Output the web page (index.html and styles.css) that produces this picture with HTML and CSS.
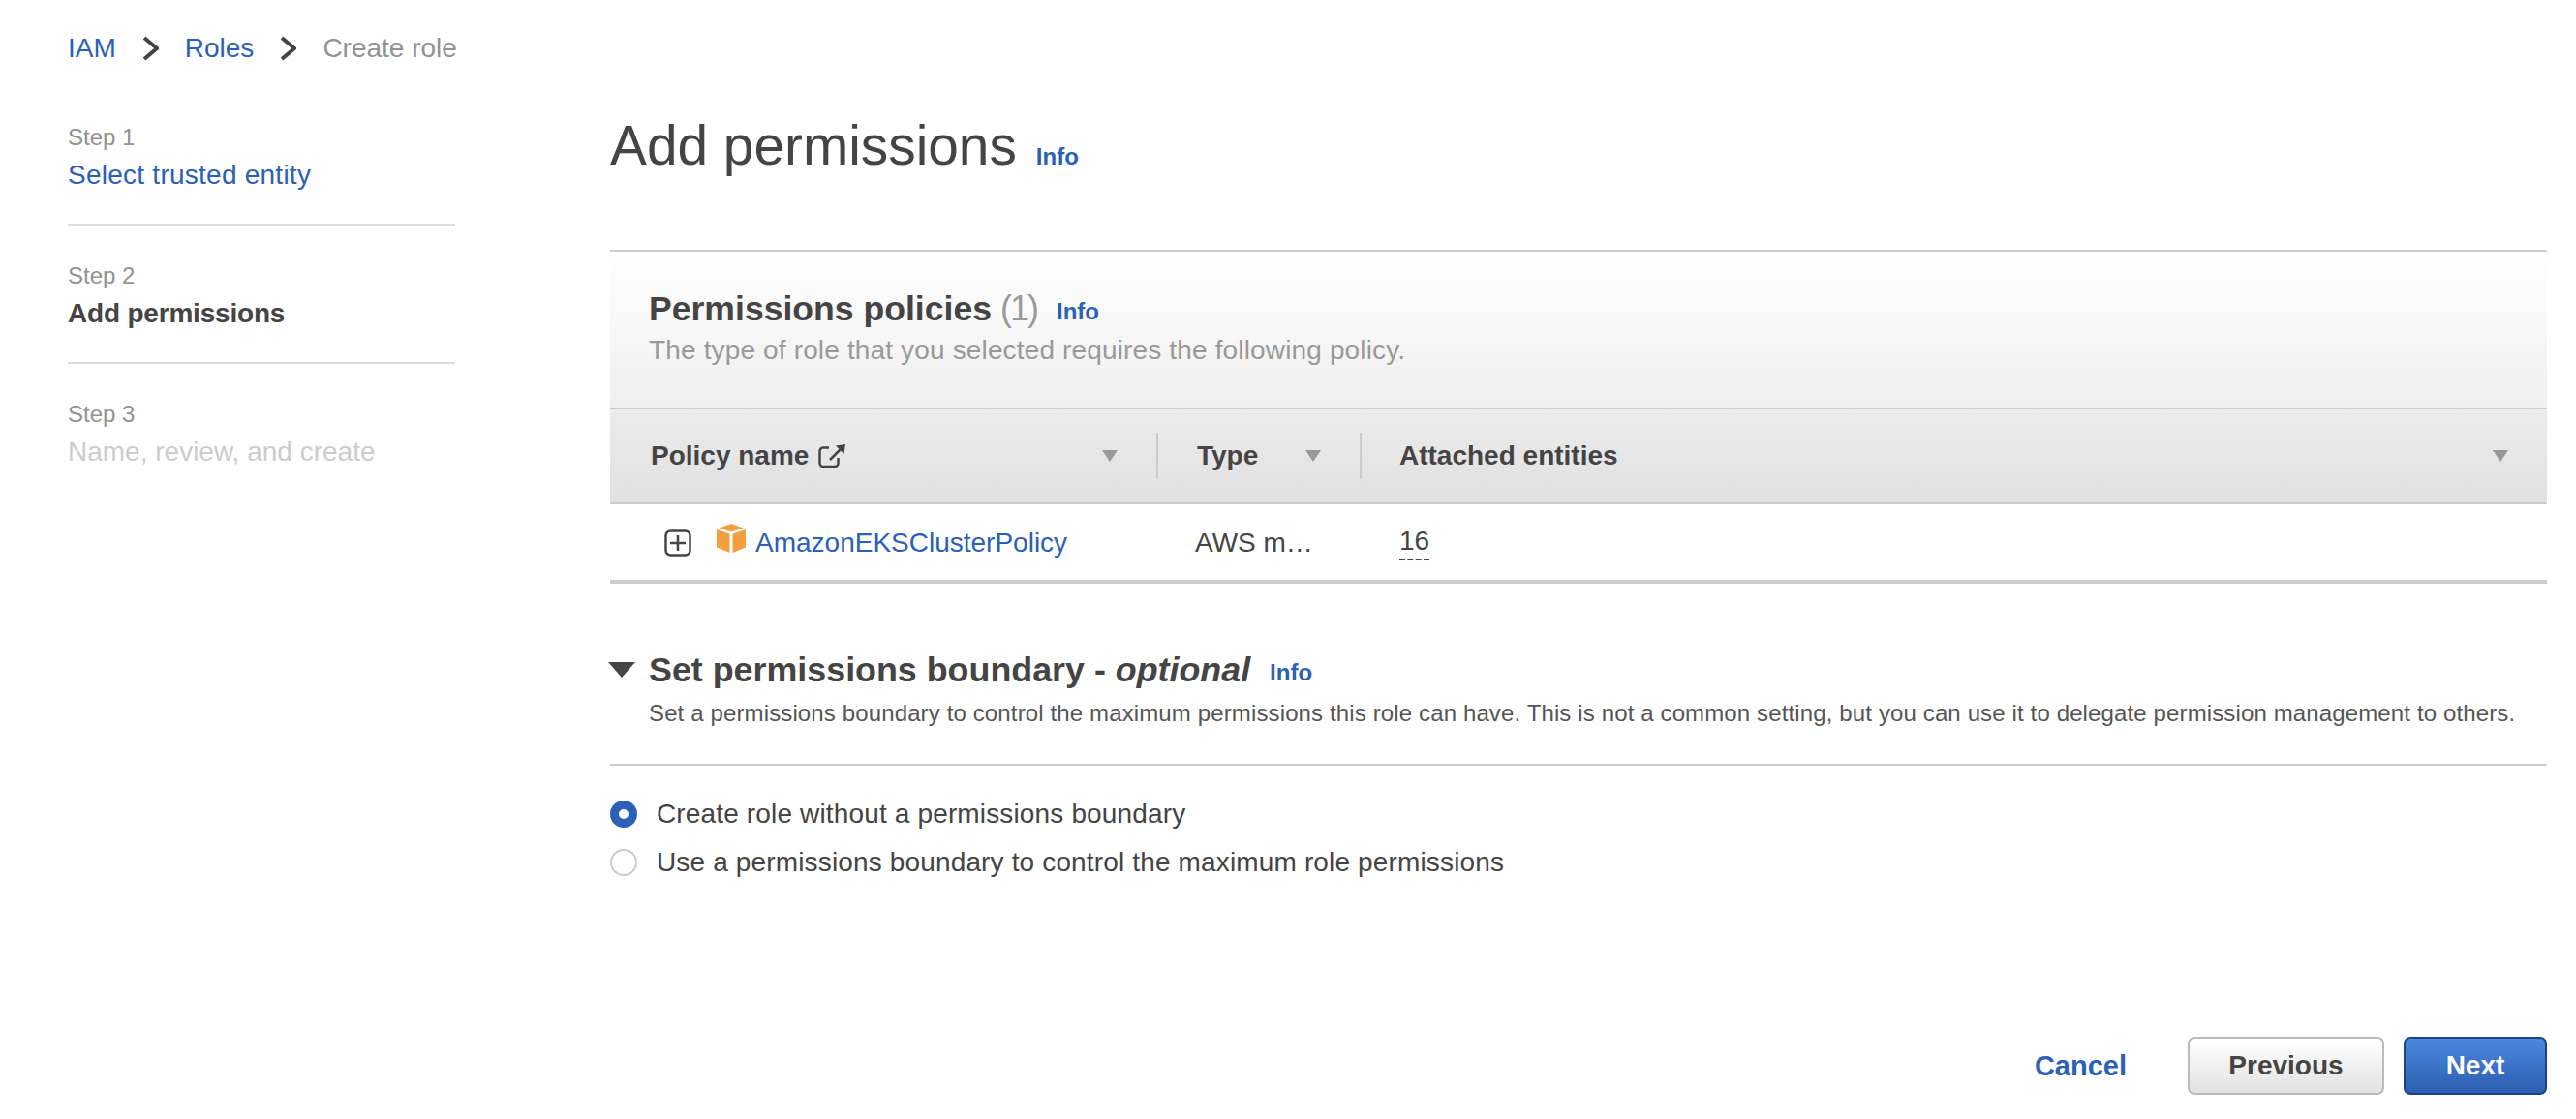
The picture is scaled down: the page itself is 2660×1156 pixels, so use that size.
FILE: index.html
```html
<!DOCTYPE html>
<html>
<head>
<meta charset="UTF-8">
<title>Create role</title>
<link rel="stylesheet" href="styles.css">
</head>
<body>
	<div id="page">
		<nav class="crumbs">
			<a href="#">IAM</a>
			<svg class="chevron" viewBox="0 0 17 26"><path d="M2 2l13 11L2 24" /></svg>
			<a href="#">Roles</a>
			<svg class="chevron" viewBox="0 0 17 26"><path d="M2 2l13 11L2 24" /></svg>
			<span class="crumb-current">Create role</span>
		</nav>

		<div class="layout">
			<ul class="steps">
				<li class="step">
					<div class="step-label">Step 1</div>
					<a class="step-name step-link" href="#">Select trusted entity</a>
				</li>
				<li class="step">
					<div class="step-label">Step 2</div>
					<div class="step-name step-active">Add permissions</div>
				</li>
				<li class="step">
					<div class="step-label">Step 3</div>
					<div class="step-name step-disabled">Name, review, and create</div>
				</li>
			</ul>

			<main class="content">
				<header class="title-row">
					<h1>Add permissions</h1>
					<a class="info" href="#">Info</a>
				</header>

				<section class="panel">
					<div class="panel-head">
						<div class="panel-title">
							<h2>Permissions policies</h2>
							<span class="count">(1)</span>
							<a class="info" href="#">Info</a>
						</div>
						<p class="panel-desc">The type of role that you selected requires the following policy.</p>
					</div>

					<div class="table-head">
						<div class="th col-name">
							<span class="th-label">Policy name
								<svg class="ext-link" viewBox="0 0 28 24">
									<path d="M11 3.500H5A3.500 3.500 0 0 0 1.500 7v12.500A3.500 3.500 0 0 0 5 23h12a3.500 3.500 0 0 0 3.500-3.500V14" />
									<path d="M12 16L23 5" />
									<path class="ext-head" d="M28 0l-1.500 10L18 1.500z" />
								</svg>
							</span>
							<span class="caret"></span>
						</div>
						<div class="th col-type">
							<span class="th-label">Type</span>
							<span class="caret"></span>
						</div>
						<div class="th col-entities">
							<span class="th-label">Attached entities</span>
							<span class="caret"></span>
						</div>
					</div>

					<div class="table-row">
						<div class="td col-name">
							<svg class="expand" viewBox="0 0 28 28">
								<rect x="1.500" y="1.500" width="25" height="25" rx="5" />
								<path d="M14 6v16M6 14h16" />
							</svg>
							<svg class="cube" viewBox="0 0 30 30">
								<path fill="#f2a03d" d="M15 0l12.500 4.500L15 8.500 2.500 4.500z" />
								<path fill="#f2a03d" d="M0 6l13.500 4.500V30L0 24.500z" />
								<path fill="#f2a03d" d="M30 6l-13.500 4.500V30L30 24.500z" />
							</svg>
							<a href="#">AmazonEKSClusterPolicy</a>
						</div>
						<div class="td col-type">AWS m…</div>
						<div class="td col-entities"><span class="dashed">16</span></div>
					</div>
				</section>

				<section class="boundary">
					<div class="boundary-title">
						<span class="toggle"></span>
						<h2>Set permissions boundary - <em>optional</em></h2>
						<a class="info" href="#">Info</a>
					</div>
					<p class="boundary-desc">Set a permissions boundary to control the maximum permissions this role can have. This is not a common setting, but you can use it to delegate permission management to others.</p>
				</section>

				<div class="radios">
					<div class="radio-row"><span class="radio radio-on"></span>Create role without a permissions boundary</div>
					<div class="radio-row"><span class="radio"></span>Use a permissions boundary to control the maximum role permissions</div>
				</div>

				<footer class="actions">
					<a class="cancel" href="#">Cancel</a>
					<button class="btn btn-prev">Previous</button>
					<button class="btn btn-next">Next</button>
				</footer>
			</main>
		</div>
	</div>
</body>
</html>
```

FILE: styles.css
```css
* {
	box-sizing: border-box;
}

body {
	margin: 0;
	background-color: #fff;
	color: #444;
	font-family: "Liberation Sans", Arial, sans-serif;
	font-size: 28px;
}

a {
	color: #2b60b6;
	text-decoration: none;
}

h1, h2, p, ul {
	margin: 0;
	padding: 0;
}

#page {
	padding: 30px 30px 0 70px;
}

.crumbs {
	display: flex;
	align-items: center;
	gap: 27px;
	height: 40px;
	line-height: 40px;
}

.chevron {
	width: 17px;
	height: 26px;
	fill: none;
	stroke: #444;
	stroke-width: 4;
}

.crumb-current {
	color: #929292;
}

.layout {
	display: flex;
}

.steps {
	width: 400px;
	margin: 53px 160px 0 0;
	list-style: none;
}

.step {
	padding-bottom: 30px;
	margin-bottom: 33px;
	border-bottom: 2px solid #ddd;
}

.step:last-child {
	border-bottom: none;
}

.step-label {
	font-size: 24px;
	line-height: 38px;
	color: #929292;
}

.step-name {
	display: block;
	line-height: 40px;
}

.step-link {
	letter-spacing: 0.25px;
}

.step-active {
	font-weight: bold;
	letter-spacing: -0.2px;
}

.step-disabled {
	color: #ccc;
}

.content {
	flex: 1;
	padding-top: 45px;
}

.title-row {
	display: flex;
	align-items: center;
	gap: 20px;
	height: 70px;
}

h1 {
	margin-top: 2px;
	font-size: 56.800px;
	font-weight: normal;
	line-height: 70px;
}

.info {
	font-size: 24px;
	font-weight: bold;
}

.title-row .info {
	margin-top: 24px;
}

.panel {
	margin-top: 73px;
	border-top: 2px solid #ccc;
	border-bottom: 4px solid #ccc;
}

.panel-head {
	height: 161px;
	padding: 37px 0 0 40px;
	background: linear-gradient(#fff, #efefef);
}

.panel-title {
	display: flex;
	align-items: center;
	height: 44px;
	line-height: 44px;
}

h2 {
	font-size: 35.600px;
	font-weight: bold;
}

.count {
	margin-left: 9px;
	font-size: 36px;
	letter-spacing: -2px;
	color: #999;
}

.panel-title .info {
	margin: 6px 0 0 20px;
}

.panel-desc {
	margin-top: 3px;
	font-size: 28px;
	letter-spacing: 0.150px;
	line-height: 36px;
	color: #999;
}

.table-head {
	display: flex;
	align-items: center;
	height: 100px;
	border-top: 2px solid #ccc;
	border-bottom: 2px solid #ccc;
	background: linear-gradient(#ececec, #e0e0e0);
}

.th {
	display: flex;
	align-items: center;
	justify-content: space-between;
	height: 48px;
	padding-right: 40px;
	font-weight: bold;
	border-right: 2px solid #ccc;
}

.th:last-child {
	border-right: none;
}

.th-label {
	display: flex;
	align-items: center;
	gap: 10px;
}

.col-name {
	width: 566px;
	padding-left: 42px;
}

.col-type {
	width: 210px;
	padding-left: 40px;
}

.col-entities {
	flex: 1;
	padding-left: 39px;
}

.ext-link {
	width: 28px;
	height: 24px;
	fill: none;
	stroke: #444;
	stroke-width: 2.500;
}

.ext-head {
	fill: #444;
	stroke: none;
}

.caret {
	width: 0;
	height: 0;
	border-left: 8px solid transparent;
	border-right: 8px solid transparent;
	border-top: 12px solid #999;
}

.table-row {
	display: flex;
	align-items: center;
	height: 78px;
	padding-top: 2px;
}

.td {
	display: flex;
	align-items: center;
}

.td.col-name {
	padding-left: 56px;
}

.td.col-type {
	padding-left: 38px;
}

.expand {
	width: 28px;
	height: 28px;
	margin-right: 26px;
	fill: none;
	stroke: #444;
	stroke-width: 2.500;
}

.cube {
	width: 30px;
	height: 30px;
	margin: -10px 10px 0 0;
}

.dashed {
	padding-bottom: 2px;
	border-bottom: 2px dashed #444;
}

.boundary {
	margin-top: 67px;
	border-bottom: 2px solid #ccc;
	padding-bottom: 35px;
}

.boundary-title {
	display: flex;
	align-items: center;
	height: 44px;
	padding-left: 40px;
	position: relative;
}

.boundary-title h2 {
	font-size: 35.850px;
}

.toggle {
	position: absolute;
	left: -2px;
	top: 14px;
	width: 0;
	height: 0;
	border-left: 14px solid transparent;
	border-right: 14px solid transparent;
	border-top: 16px solid #444;
}

.boundary-title .info {
	margin: 6px 0 0 20px;
}

.boundary-desc {
	margin-top: 6px;
	padding-left: 40px;
	font-size: 24px;
	letter-spacing: 0.130px;
	line-height: 34px;
	color: #555;
}

.radios {
	margin-top: 25px;
}

.radio-row {
	display: flex;
	align-items: center;
	height: 50px;
	letter-spacing: 0.150px;
}

.radio {
	width: 28px;
	height: 28px;
	margin-right: 20px;
	border-radius: 50%;
	border: 2px solid #ccc;
}

.radio-on {
	border: 9px solid #2b60b6;
}

.actions {
	display: flex;
	align-items: center;
	justify-content: flex-end;
	margin-top: 155px;
}

.cancel {
	margin-right: 63px;
	font-size: 29px;
	font-weight: bold;
}

.btn {
	height: 60px;
	border-radius: 7px;
	font-family: inherit;
	font-size: 28px;
	font-weight: bold;
	cursor: pointer;
}

.btn-prev {
	width: 203px;
	margin-right: 20px;
	border: 2px solid #bbb;
	color: #444;
	background: linear-gradient(#fff, #e2e2e2);
}

.btn-next {
	width: 148px;
	border: 2px solid #1d4480;
	color: #fff;
	background: linear-gradient(#4a88e0, #2c5fb0);
}
```
